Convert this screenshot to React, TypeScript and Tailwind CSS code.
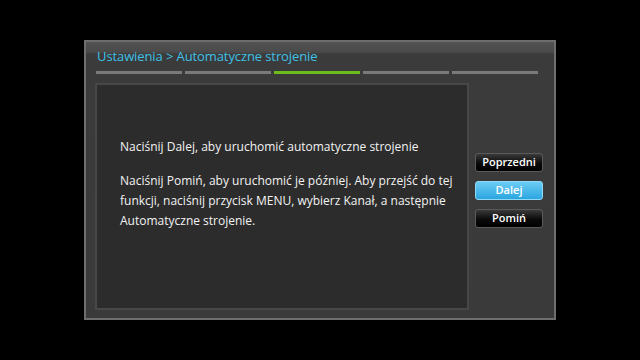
import React from "react";

const steps = [false, false, true, false, false];

const buttons = [
  { label: "Poprzedni", active: false },
  { label: "Dalej", active: true },
  { label: "Pomiń", active: false },
];

const App: React.FC = () => {
  return (
    <div className="w-[640px] h-[360px] bg-black pt-[40px] pl-[84px] font-['Open_Sans',sans-serif]">
      <div className="w-[472px] h-[280px] border-2 border-[#6e6e6e] bg-[linear-gradient(#525252_0px,#4a4a4a_10px,#3b3b3b_12px,#3a3a3a_100%)] flex flex-col">
        <div className="h-[28px] pl-[11px] pt-[5px] text-[13px] leading-[18px] text-[#3fc0e6] tracking-[-0.1px]">
          Ustawienia &gt; Automatyczne strojenie
        </div>
        <div className="flex gap-[3px] pl-[10px] mt-[1px]">
          {steps.map((on, i) => (
            <div
              key={i}
              className={
                on
                  ? "w-[86px] h-[3px] bg-[#6cbc1c]"
                  : "w-[86px] h-[3px] bg-[#7a7a7a]"
              }
            />
          ))}
        </div>
        <div className="flex mt-[9px] pl-[9px]">
          <div className="w-[374px] h-[227px] bg-[#2c2c2c] border-2 border-[#474747] pl-[23px] pt-[52px] text-[12px] leading-[20px] text-[#f2f2f2]">
            <p>Naciśnij Dalej, aby uruchomić automatyczne strojenie</p>
            <p className="mt-[14px]">
              Naciśnij Pomiń, aby uruchomić je później. Aby przejść do tej
              funkcji, naciśnij przycisk MENU, wybierz Kanał, a następnie
              Automatyczne strojenie.
            </p>
          </div>
          <div className="flex flex-col gap-[9px] ml-[6px] pt-[70px]">
            {buttons.map((b) => (
              <div
                key={b.label}
                className={
                  b.active
                    ? "w-[68px] h-[19px] rounded-[3px] border border-[#8fd8f8] bg-[linear-gradient(#6cccf4,#2aa6e0)] text-white text-[11px] font-semibold flex items-center justify-center"
                    : "w-[68px] h-[19px] rounded-[3px] border border-[#5a5a5a] bg-[linear-gradient(#3a3a3a,#0a0a0a_55%,#000)] text-white text-[11px] font-semibold flex items-center justify-center"
                }
              >
                {b.label}
              </div>
            ))}
          </div>
        </div>
      </div>
    </div>
  );
};

export default App;
